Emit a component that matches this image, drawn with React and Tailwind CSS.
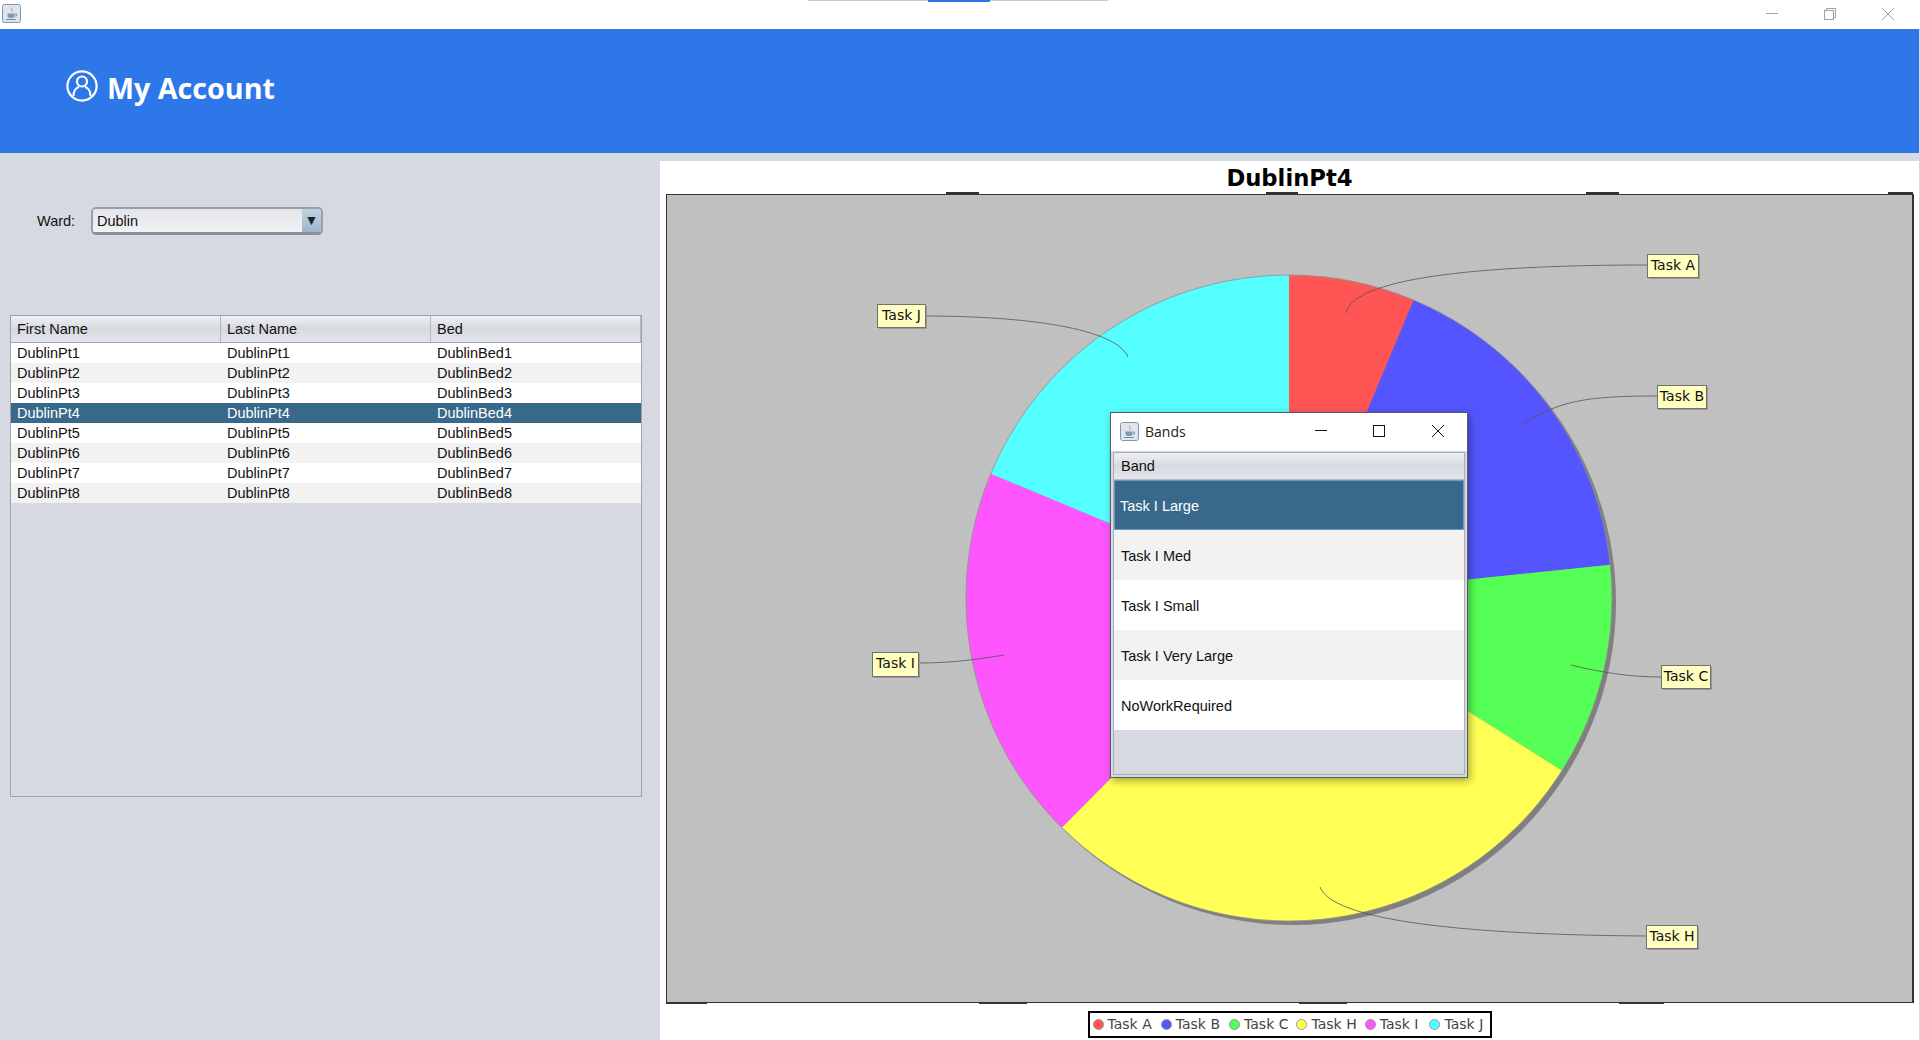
const patients = [1, 2, 3, 4, 5, 6, 7, 8];
const bands = ['Task I Large', 'Task I Med', 'Task I Small', 'Task I Very Large', 'NoWorkRequired'];

const CX = 1290;
const CY = 598;
const R = 323;

const slices = [
  { name: 'Task A', color: '#ff5555', from: 0, to: 22.7, gap: 'mr-[9px]' },
  { name: 'Task B', color: '#5555ff', from: 22.7, to: 84.1, gap: 'mr-[9px]' },
  { name: 'Task C', color: '#55ff55', from: 84.1, to: 122.3, gap: 'mr-[8px]' },
  { name: 'Task H', color: '#ffff55', from: 122.3, to: 224.7, gap: 'mr-[8px]' },
  { name: 'Task I', color: '#ff55ff', from: 224.7, to: 292.6, gap: 'mr-[11px]' },
  { name: 'Task J', color: '#55ffff', from: 292.6, to: 360, gap: 'mr-0' },
];

const labels = [
  { text: 'Task A', x: 1648, y: 254, w: 51, h: 23, line: 'M1347 313 C1355 275 1500 265 1648 265' },
  { text: 'Task B', x: 1658, y: 385, w: 49, h: 23, line: 'M1523 425 C1560 400 1590 396 1658 396' },
  { text: 'Task C', x: 1662, y: 665, w: 49, h: 23, line: 'M1572 665 C1600 672 1630 677 1662 677' },
  { text: 'Task H', x: 1647, y: 925, w: 51, h: 23, line: 'M1321 887 C1335 925 1500 935 1647 936' },
  { text: 'Task I', x: 873, y: 652, w: 46, h: 24, line: 'M1005 655 C975 660 950 663 919 663' },
  { text: 'Task J', x: 878, y: 304, w: 48, h: 23, line: 'M1129 357 C1115 325 1010 316 926 316' },
];

const topTicks = [[947, 980], [1267, 1299], [1587, 1620], [1889, 1914]];
const bottomTicks = [[667, 708], [980, 1028], [1300, 1348], [1620, 1665]];

function point(deg) {
  const a = (deg * Math.PI) / 180;
  return [CX + R * Math.sin(a), CY - R * Math.cos(a)];
}

function slicePath(from, to) {
  const [x1, y1] = point(from);
  const [x2, y2] = point(to);
  const large = to - from > 180 ? 1 : 0;
  return `M${CX} ${CY} L${x1} ${y1} A${R} ${R} 0 ${large} 1 ${x2} ${y2} Z`;
}

function JavaIcon({ className }) {
  return (
    <svg viewBox="0 0 19 19" className={className}>
      <rect x="0.5" y="0.5" width="18" height="18" rx="2" fill="#dfe5ec" stroke="#8296aa" />
      <path d="M10 3 C8 5 11 6 9.5 8.5 C12 7 9.5 5.5 10 3Z" fill="#e0762a" />
      <path d="M5.5 9.5 H12.5 V12 C12.5 13.5 11 14 9 14 C7 14 5.5 13.5 5.5 12Z" fill="#7f9ab5" />
      <path d="M12.5 10 H14.5 V12 H12.5" fill="none" stroke="#7f9ab5" />
      <path d="M4 15.5 H14" stroke="#6f8aa5" />
    </svg>
  );
}

function AccountIcon() {
  return (
    <svg viewBox="0 0 32 32" className="h-8 w-8" fill="none" stroke="white" strokeWidth="2.2">
      <circle cx="16" cy="16" r="14.6" />
      <circle cx="16" cy="11.5" r="5" />
      <path d="M7.5 26 C7.5 20 11 17.5 13 17 M24.5 26 C24.5 20 21 17.5 19 17" />
    </svg>
  );
}

function PieChart() {
  return (
    <svg viewBox="668 195 1245 807" className="block h-full w-full overflow-visible">
      {topTicks.map(([a, b]) => (
        <rect key={a} x={a} y="192" width={b - a} height="3" fill="#333333" />
      ))}
      {bottomTicks.map(([a, b]) => (
        <rect key={a} x={a} y="1002" width={b - a} height="2" fill="#333333" />
      ))}
      <circle cx={CX + 4} cy={CY + 4} r={R} fill="#808080" />
      {slices.map((s) => (
        <path key={s.name} d={slicePath(s.from, s.to)} fill={s.color} />
      ))}
      <circle cx={CX} cy={CY} r={R} fill="none" stroke="#8f8f8f" strokeWidth="0.8" />
      {labels.map((l) => (
        <g key={l.text}>
          <path d={l.line} fill="none" stroke="#555555" strokeWidth="0.8" />
          <rect x={l.x + 2} y={l.y + 2} width={l.w} height={l.h} fill="#9a9a9a" />
          <rect x={l.x + 0.5} y={l.y + 0.5} width={l.w} height={l.h} fill="#ffffc0" stroke="#707070" />
          <text
            x={l.x + l.w / 2 + 0.5}
            y={l.y + 16}
            textAnchor="middle"
            fontSize="14"
            fill="#111111"
            fontFamily="'DejaVu Sans', sans-serif"
          >
            {l.text}
          </text>
        </g>
      ))}
    </svg>
  );
}

function PatientTable() {
  return (
    <div className="ml-[10px] mt-[80px] flex h-[482px] w-[632px] flex-col border border-[#9da3ad]">
      <div className="grid h-[27px] grid-cols-[210px_210px_1fr] border-b border-[#a4a9b5] bg-linear-to-b from-[#eef0f3] via-[#d6d9df] to-[#e4e6ee]">
        {['First Name', 'Last Name', 'Bed'].map((h) => (
          <div key={h} className="flex items-center border-r border-[#b4b8c2] pl-[6px] pt-[2px] text-[14.5px] text-[#111]">
            {h}
          </div>
        ))}
      </div>
      {patients.map((n) => (
        <div
          key={n}
          className={`grid h-5 grid-cols-[210px_210px_1fr] items-center text-[14.5px] ${
            n === 4 ? 'bg-[#39698a] text-white' : n % 2 === 0 ? 'bg-[#f2f2f2] text-[#111]' : 'bg-white text-[#111]'
          }`}
        >
          <div className="pl-[6px]">DublinPt{n}</div>
          <div className="pl-[6px]">DublinPt{n}</div>
          <div className="pl-[6px]">DublinBed{n}</div>
        </div>
      ))}
    </div>
  );
}

function BandsDialog() {
  return (
    <div className="absolute left-[1110px] top-[412px] flex h-[366px] w-[358px] flex-col border border-[#555c66] bg-[#d6d9df] shadow-[2px_3px_8px_rgba(0,0,0,0.35)]">
      <div className="flex h-[38px] items-center bg-white pb-[2px] pl-[9px]">
        <JavaIcon className="h-[19px] w-[19px]" />
        <span className="ml-[6px] text-[14px] text-[#222]" style={{ fontFamily: "'Open Sans', sans-serif" }}>Bands</span>
        <svg viewBox="0 0 12 12" className="ml-[129px] h-3 w-3" stroke="#111" fill="none">
          <path d="M0 5.5H12" />
        </svg>
        <svg viewBox="0 0 12 12" className="ml-[46px] h-3 w-3" stroke="#111" fill="none">
          <rect x="0.5" y="0.5" width="11" height="11" />
        </svg>
        <svg viewBox="0 0 12 12" className="ml-[47px] h-3 w-3" stroke="#111" fill="none">
          <path d="M0 0L12 12M12 0L0 12" />
        </svg>
      </div>
      <div className="mx-[2px] mb-[2px] mt-[1px] flex flex-1 flex-col border border-[#a8adb6]">
        <div className="flex h-[27px] items-center border-b border-[#b4b8c2] bg-linear-to-b from-[#eef0f3] via-[#d6d9df] to-[#e4e6ee] pl-[7px] pt-[2px] text-[14.5px] text-[#111]">
          Band
        </div>
        {bands.map((b, i) => (
          <div
            key={b}
            className={`flex h-[50px] items-center pt-[4px] text-[14.5px] ${
              i === 0
                ? 'border border-[#7099c4] bg-[#39698a] pl-[5px] text-white'
                : i % 2 === 1
                  ? 'bg-[#f2f2f2] pl-[7px] text-[#111]'
                  : 'bg-white pl-[7px] text-[#111]'
            }`}
          >
            {b}
          </div>
        ))}
      </div>
    </div>
  );
}

export default function App() {
  return (
    <div
      className="relative flex h-[1040px] w-[1920px] flex-col overflow-hidden bg-[#d6d9e2]"
      style={{ fontFamily: "'Liberation Sans', Arial, sans-serif" }}
    >
      {/* window title bar */}
      <div className="relative flex h-[29px] items-center justify-between bg-white pb-[2px] pl-[2px] pr-[26px]">
        <JavaIcon className="h-[19px] w-[19px]" />
        <div className="absolute left-[808px] top-0 h-px w-[300px] bg-[#c8c8c8]" />
        <div className="absolute left-[928px] top-0 h-[2px] w-[62px] bg-[#2e77e8]" />
        <div className="flex items-center gap-[46px]">
          <svg viewBox="0 0 12 12" className="h-3 w-3" stroke="#a0a0a0" fill="none">
            <path d="M0 5.5H12" />
          </svg>
          <svg viewBox="0 0 12 12" className="h-3 w-3" stroke="#a0a0a0" fill="none">
            <rect x="0.5" y="2.5" width="9" height="9" />
            <path d="M2.5 2.5V0.5H11.5V9.5H9.5" />
          </svg>
          <svg viewBox="0 0 12 12" className="h-3 w-3" stroke="#a0a0a0" fill="none">
            <path d="M0 0L12 12M12 0L0 12" />
          </svg>
        </div>
      </div>

      {/* blue banner */}
      <div className="mr-px flex h-[124px] items-start bg-[#2e77e8] pl-[66px] pt-[41px]">
        <AccountIcon />
        <h1
          className="ml-[9px] mt-[-2px] text-[28.7px] font-bold leading-[40px] text-white"
          style={{ fontFamily: "'Open Sans', sans-serif" }}
        >
          My Account
        </h1>
      </div>

      <div className="flex flex-1">
        {/* ward picker and patient table */}
        <div className="w-[660px] shrink-0">
          <div className="ml-[37px] mt-[54px] flex h-7 items-center">
            <span className="w-[54px] pt-[1px] text-[14.5px] text-[#111]">Ward:</span>
            <div className="flex h-7 w-[232px] overflow-hidden rounded-[5px] border-2 border-b-[3px] border-[#9aa0aa] border-b-[#8a8f98]">
              <div className="flex-1 bg-linear-to-b from-[#e3e5ea] to-[#f2f3f6] pl-[4px] text-[14.5px] leading-[25px] text-[#111]">
                Dublin
              </div>
              <div className="flex w-[19px] items-center justify-center bg-linear-to-b from-[#c3d3e3] to-[#9db6cb] text-[14px] text-[#222]">
                ▼
              </div>
            </div>
          </div>
          <PatientTable />
        </div>

        {/* pie chart panel */}
        <div className="mr-px mt-2 flex flex-1 flex-col items-center bg-white">
          <div
            className="flex h-[33px] items-center pt-[2px] text-[22.7px] font-bold text-black"
            style={{ fontFamily: "'DejaVu Sans', sans-serif" }}
          >
            DublinPt4
          </div>
          <div className="ml-px h-[809px] w-[1248px] border-y border-l border-r-2 border-[#333333] bg-[#c0c0c0]">
            <PieChart />
          </div>
          <div
            className="mt-2 flex h-[27px] w-[404px] items-center border-2 border-black pl-[3px] text-[14px] text-[#444]"
            style={{ fontFamily: "'DejaVu Sans', sans-serif" }}
          >
            {slices.map((s) => (
              <div key={s.name} className={`flex items-center gap-[4px] ${s.gap}`}>
                <span
                  className="h-[11px] w-[11px] rounded-full border border-[#999]"
                  style={{ backgroundColor: s.color }}
                />
                <span>{s.name}</span>
              </div>
            ))}
          </div>
        </div>
      </div>

      <BandsDialog />
    </div>
  );
}
